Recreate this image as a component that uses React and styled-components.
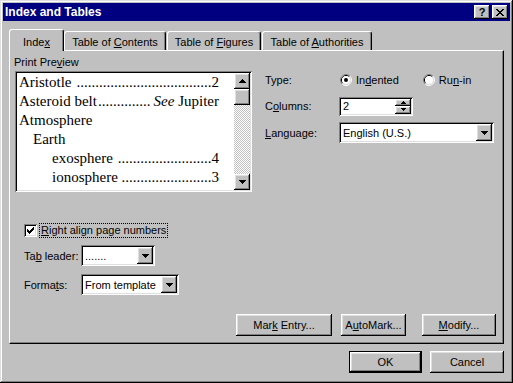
import React from 'react';
import styled, { createGlobalStyle, css } from 'styled-components';

const GlobalStyle = createGlobalStyle`
  html, body {
    margin: 0;
    padding: 0;
    background: #c0c0c0;
  }
  body {
    font-family: "Liberation Sans", Arial, sans-serif;
    font-size: 11px;
    color: #000;
  }
  u {
    text-decoration-thickness: 1px;
    text-underline-offset: 1px;
  }
`;

const raised = css`
  box-shadow: inset -1px -1px #000, inset 1px 1px #fff, inset -2px -2px #808080, inset 2px 2px #dfdfdf;
`;

const sunken = css`
  box-shadow: inset 1px 1px #808080, inset -1px -1px #fff, inset 2px 2px #000, inset -2px -2px #dfdfdf;
`;

const Window = styled.div`
  width: 513px;
  height: 383px;
  box-sizing: border-box;
  padding: 3px;
  background: #c0c0c0;
  box-shadow: inset -1px -1px #000, inset 1px 1px #dfdfdf, inset -2px -2px #808080, inset 2px 2px #fff;
  display: flex;
  flex-direction: column;
`;

const TitleBar = styled.div`
  height: 18px;
  background: #000080;
  color: #fff;
  display: flex;
  align-items: center;
  padding: 0 2px;
  font-weight: bold;
  font-size: 12px;
`;

const Title = styled.span`
  flex: 1;
`;

const TitleButton = styled.div`
  width: 16px;
  height: 14px;
  background: #c0c0c0;
  ${raised}
  display: flex;
  align-items: center;
  justify-content: center;
  margin-left: ${p => p.$gap || 0}px;
  font: bold 11px "Liberation Sans", sans-serif;
  color: #000;
  line-height: 14px;
`;

const Body = styled.div`
  flex: 1;
  display: flex;
  flex-direction: column;
  padding: 8px 6px 7px;
`;

const TabRow = styled.div`
  display: flex;
  align-items: flex-end;
  height: 21px;
  position: relative;
  z-index: 1;
`;

const Tab = styled.div`
  box-sizing: border-box;
  width: ${p => p.$w}px;
  height: ${p => (p.$active ? 22 : 19)}px;
  margin-bottom: ${p => (p.$active ? -1 : 0)}px;
  margin-right: ${p => p.$mr || 0}px;
  background: #c0c0c0;
  border-top: 1px solid #fff;
  border-left: 1px solid #fff;
  border-right: 1px solid #000;
  border-radius: 3px 3px 0 0;
  box-shadow: inset -1px 0 #808080;
  display: flex;
  align-items: center;
  justify-content: center;
  padding-top: 2px;
  white-space: nowrap;
`;

const Panel = styled.div`
  box-sizing: border-box;
  height: 294px;
  border-top: 1px solid #fff;
  border-left: 1px solid #fff;
  border-right: 1px solid #000;
  border-bottom: 1px solid #000;
  box-shadow: inset -1px -1px #808080;
  padding: 5px 7px 7px 4px;
  display: flex;
  flex-direction: column;
`;

const TopSection = styled.div`
  display: flex;
`;

const LeftCol = styled.div`
  width: 238px;
  display: flex;
  flex-direction: column;
`;

const Caption = styled.div`
  height: 13px;
  line-height: 13px;
`;

const PreviewFrame = styled.div`
  box-sizing: border-box;
  width: 237px;
  height: 121px;
  margin: 2px 0 0 1px;
  padding: 2px;
  ${sunken}
  background: #fff;
  display: flex;
`;

const PreviewPage = styled.div`
  flex: 1;
  min-width: 0;
  overflow: hidden;
  background: #fff;
  padding-right: 15px;
  font-family: "Liberation Serif", "Times New Roman", serif;
  font-size: 15px;
`;

const Entry = styled.div`
  display: flex;
  height: 19px;
  line-height: 19px;
  white-space: pre;
  padding-left: ${p => p.$indent}px;
`;

const Leader = styled.span`
  flex: 1;
  min-width: 0;
  overflow: hidden;
  white-space: nowrap;
  text-align: right;
`;

const See = styled.i`
  margin-left: 3px;
`;

const ScrollBar = styled.div`
  width: 16px;
  display: flex;
  flex-direction: column;
`;

const ScrollButton = styled.div`
  width: 16px;
  height: 16px;
  background: #c0c0c0;
  ${raised}
  display: flex;
  align-items: center;
  justify-content: center;
`;

const Track = styled.div`
  flex: 1;
  background-image: repeating-conic-gradient(#c0c0c0 0 25%, #fff 0 50%);
  background-size: 2px 2px;
`;

const RightCol = styled.div`
  margin-left: 13px;
  padding-top: 14px;
  display: flex;
  flex-direction: column;
  gap: 6px;
`;

const FieldRow = styled.div`
  display: flex;
  align-items: center;
  height: ${p => p.$h}px;
  margin-top: ${p => p.$mt || 0}px;
`;

const Label = styled.span`
  width: ${p => p.$w}px;
  flex-shrink: 0;
`;

const RadioOption = styled.label`
  display: flex;
  align-items: center;
  gap: 4px;
  margin-left: 1px;
  margin-right: ${p => p.$mr || 0}px;
`;

const Field = styled.div`
  box-sizing: border-box;
  width: ${p => p.$w}px;
  height: ${p => p.$h}px;
  padding: 2px;
  background: #fff;
  ${sunken}
  display: flex;
`;

const FieldText = styled.span`
  flex: 1;
  padding-left: 2px;
  display: flex;
  align-items: center;
  white-space: nowrap;
`;

const DropButton = styled.div`
  width: 16px;
  background: #c0c0c0;
  ${raised}
  display: flex;
  align-items: center;
  justify-content: center;
`;

const SpinButtons = styled.div`
  width: 16px;
  display: flex;
  flex-direction: column;
`;

const SpinHalf = styled.div`
  flex: 1;
  background: #c0c0c0;
  ${raised}
  display: flex;
  align-items: center;
  justify-content: center;
`;

const Options = styled.div`
  padding-left: 10px;
  display: flex;
  flex-direction: column;
`;

const CheckRow = styled.div`
  display: flex;
  align-items: center;
  height: 15px;
  margin-top: 31px;
`;

const CheckBox = styled.div`
  box-sizing: border-box;
  width: 13px;
  height: 13px;
  background: #fff;
  ${sunken}
  display: flex;
  align-items: center;
  justify-content: center;
`;

const FocusLabel = styled.span`
  margin-left: 2px;
  padding: 0 1px;
  border: 1px dotted #000;
  line-height: 13px;
`;

const ButtonRow = styled.div`
  margin-top: auto;
  display: flex;
  justify-content: flex-end;
`;

const Button = styled.div`
  box-sizing: border-box;
  width: ${p => p.$w}px;
  height: 22px;
  margin-left: ${p => p.$ml || 0}px;
  background: #c0c0c0;
  ${raised}
  display: flex;
  align-items: center;
  justify-content: center;
  white-space: nowrap;
  ${p => p.$default && css`
    box-shadow: inset 0 0 0 1px #000, inset -2px -2px #000, inset 2px 2px #fff, inset -3px -3px #808080, inset 3px 3px #dfdfdf;
  `}
`;

const Footer = styled.div`
  margin-top: 7px;
  display: flex;
  justify-content: flex-end;
`;

const DownArrow = ({ small }) =>
  small ? (
    <svg width="5" height="3" viewBox="0 0 5 3" shapeRendering="crispEdges">
      <path d="M0 0h5v1H0z M1 1h3v1H1z M2 2h1v1H2z" fill="#000" />
    </svg>
  ) : (
    <svg width="7" height="4" viewBox="0 0 7 4" shapeRendering="crispEdges">
      <path d="M0 0h7v1H0z M1 1h5v1H1z M2 2h3v1H2z M3 3h1v1H3z" fill="#000" />
    </svg>
  );

const UpArrow = ({ small }) =>
  small ? (
    <svg width="5" height="3" viewBox="0 0 5 3" shapeRendering="crispEdges">
      <path d="M2 0h1v1H2z M1 1h3v1H1z M0 2h5v1H0z" fill="#000" />
    </svg>
  ) : (
    <svg width="7" height="4" viewBox="0 0 7 4" shapeRendering="crispEdges">
      <path d="M3 0h1v1H3z M2 1h3v1H2z M1 2h5v1H1z M0 3h7v1H0z" fill="#000" />
    </svg>
  );

const CloseGlyph = () => (
  <svg width="8" height="7" viewBox="0 0 8 7" shapeRendering="crispEdges">
    <path
      d="M0 0h2v1H0z M6 0h2v1H6z M1 1h2v1H1z M5 1h2v1H5z M2 2h4v1H2z M3 3h2v1H3z M2 4h4v1H2z M1 5h2v1H1z M5 5h2v1H5z M0 6h2v1H0z M6 6h2v1H6z"
      fill="#000"
    />
  </svg>
);

const CheckMark = () => (
  <svg width="7" height="7" viewBox="0 0 7 7" shapeRendering="crispEdges">
    <path
      d="M0 2h1v3H0z M1 3h1v3H1z M2 4h1v3H2z M3 3h1v3H3z M4 2h1v3H4z M5 1h1v3H5z M6 0h1v3H6z"
      fill="#000"
    />
  </svg>
);

const Radio = ({ checked }) => (
  <svg width="12" height="12" viewBox="0 0 12 12">
    <path d="M2.11 9.89 A5.5 5.5 0 0 1 9.89 2.11" stroke="#808080" fill="none" />
    <path d="M9.89 2.11 A5.5 5.5 0 0 1 2.11 9.89" stroke="#fff" fill="none" />
    <path d="M2.82 9.18 A4.5 4.5 0 0 1 9.18 2.82" stroke="#000" fill="none" />
    <path d="M9.18 2.82 A4.5 4.5 0 0 1 2.82 9.18" stroke="#dfdfdf" fill="none" />
    <circle cx="6" cy="6" r="4" fill="#fff" />
    {checked && <circle cx="6" cy="6" r="2" fill="#000" />}
  </svg>
);

const Combo = ({ w, h = 21, children }) => (
  <Field $w={w} $h={h}>
    <FieldText>{children}</FieldText>
    <DropButton>
      <DownArrow />
    </DropButton>
  </Field>
);

const tabs = [
  { key: 'index', w: 55, label: <span>Inde<u>x</u></span>, active: true },
  { key: 'toc', w: 102, mr: 1, label: <span>Table of <u>C</u>ontents</span> },
  { key: 'tof', w: 94, mr: 1, label: <span>Table of <u>F</u>igures</span> },
  { key: 'toa', w: 110, label: <span>Table of <u>A</u>uthorities</span> },
];

// dots = how many leader periods fit between the term and its page
const entries = [
  { term: 'Aristotle ', page: '2', indent: 2, dots: 36 },
  { term: 'Asteroid belt', see: 'Jupiter', indent: 2, dots: 14 },
  { term: 'Atmosphere', indent: 2 },
  { term: 'Earth', indent: 16 },
  { term: 'exosphere ', page: '4', indent: 35, dots: 25 },
  { term: 'ionosphere ', page: '3', indent: 35, dots: 24 },
];

export default function App() {
  return (
    <>
      <GlobalStyle />
      <Window>
        <TitleBar>
          <Title>Index and Tables</Title>
          <TitleButton>?</TitleButton>
          <TitleButton $gap={2}>
            <CloseGlyph />
          </TitleButton>
        </TitleBar>
        <Body>
          <TabRow>
            {tabs.map(t => (
              <Tab key={t.key} $w={t.w} $mr={t.mr} $active={t.active}>
                {t.label}
              </Tab>
            ))}
          </TabRow>
          <Panel>
            <TopSection>
              <LeftCol>
                <Caption>
                  Print Pre<u>v</u>iew
                </Caption>
                <PreviewFrame>
                  <PreviewPage>
                    {entries.map(e => (
                      <Entry key={e.term} $indent={e.indent}>
                        <span>{e.term}</span>
                        {e.dots && <Leader>{'.'.repeat(e.dots)}</Leader>}
                        {e.page && <span>{e.page}</span>}
                        {e.see && (
                          <span>
                            <See>See</See> {e.see}
                          </span>
                        )}
                      </Entry>
                    ))}
                  </PreviewPage>
                  <ScrollBar>
                    <ScrollButton>
                      <UpArrow />
                    </ScrollButton>
                    <ScrollButton />
                    <Track />
                    <ScrollButton>
                      <DownArrow />
                    </ScrollButton>
                  </ScrollBar>
                </PreviewFrame>
              </LeftCol>
              <RightCol>
                <FieldRow $h={20}>
                  <Label $w={74}>Type:</Label>
                  <RadioOption $mr={23}>
                    <Radio checked />
                    <span>
                      In<u>d</u>ented
                    </span>
                  </RadioOption>
                  <RadioOption>
                    <Radio />
                    <span>
                      Ru<u>n</u>-in
                    </span>
                  </RadioOption>
                </FieldRow>
                <FieldRow $h={20}>
                  <Label $w={74}>
                    C<u>o</u>lumns:
                  </Label>
                  <Field $w={74} $h={19}>
                    <FieldText>2</FieldText>
                    <SpinButtons>
                      <SpinHalf>
                        <UpArrow small />
                      </SpinHalf>
                      <SpinHalf>
                        <DownArrow small />
                      </SpinHalf>
                    </SpinButtons>
                  </Field>
                </FieldRow>
                <FieldRow $h={21}>
                  <Label $w={74}>
                    <u>L</u>anguage:
                  </Label>
                  <Combo w={155}>English (U.S.)</Combo>
                </FieldRow>
              </RightCol>
            </TopSection>
            <Options>
              <CheckRow>
                <CheckBox>
                  <CheckMark />
                </CheckBox>
                <FocusLabel>
                  <u>R</u>ight align page numbers
                </FocusLabel>
              </CheckRow>
              <FieldRow $h={21} $mt={7}>
                <Label $w={57}>
                  Ta<u>b</u> leader:
                </Label>
                <Combo w={74}>.......</Combo>
              </FieldRow>
              <FieldRow $h={21} $mt={8}>
                <Label $w={57}>
                  Forma<u>t</u>s:
                </Label>
                <Combo w={98}>From template</Combo>
              </FieldRow>
            </Options>
            <ButtonRow>
              <Button $w={96}>
                <span>Mar<u>k</u> Entry...</span>
              </Button>
              <Button $w={65} $ml={9}>
                <span>A<u>u</u>toMark...</span>
              </Button>
              <Button $w={74} $ml={16}>
                <span><u>M</u>odify...</span>
              </Button>
            </ButtonRow>
          </Panel>
          <Footer>
            <Button $w={73} $default>
              <span>OK</span>
            </Button>
            <Button $w={74} $ml={8}>
              <span>Cancel</span>
            </Button>
          </Footer>
        </Body>
      </Window>
    </>
  );
}
